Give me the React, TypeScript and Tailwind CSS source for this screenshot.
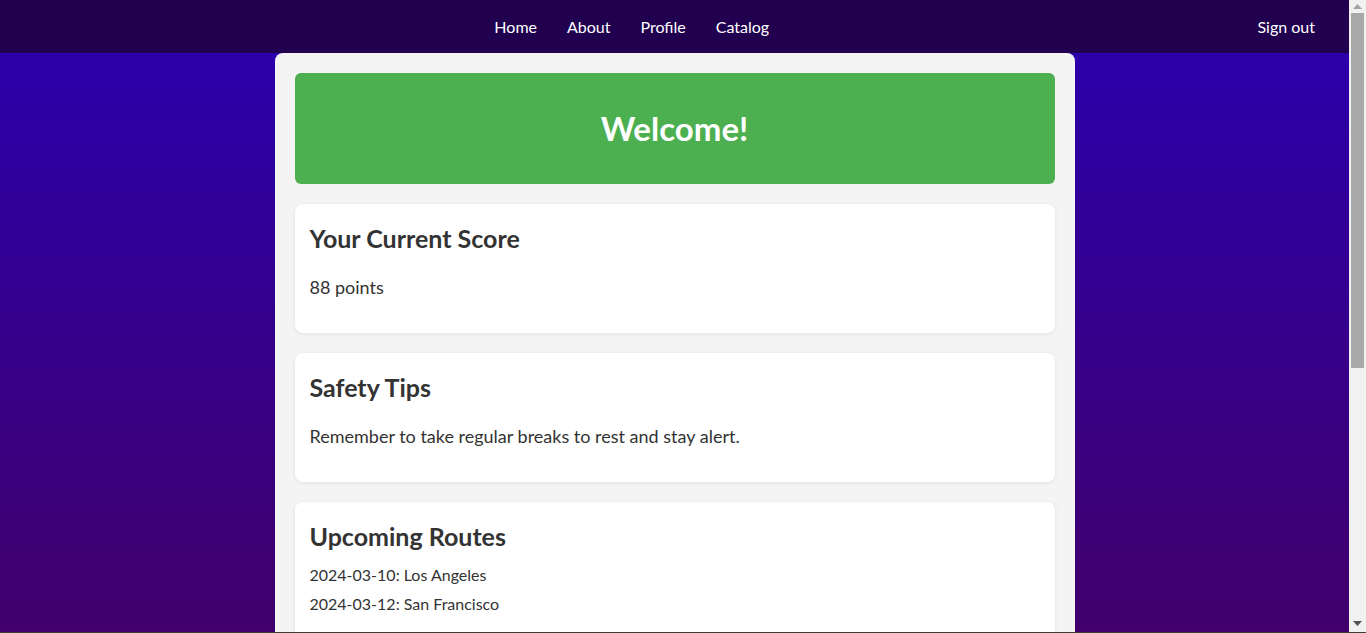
import React from "react";

function Card({ children, className = "" }: { children: React.ReactNode; className?: string }) {
  return (
    <section
      className={
        "mt-5 bg-white rounded-lg shadow-[0_1px_4px_rgba(0,0,0,0.08)] px-[15px] " + className
      }
    >
      {children}
    </section>
  );
}

export default function App() {
  const font = { fontFamily: '"Lato", "Open Sans", "Noto Sans", sans-serif' };
  return (
    <div className="h-[633px] flex flex-col overflow-hidden text-[#333]" style={font}>
      <div className="flex flex-1 min-h-0">
        <div className="flex-1 min-w-0 overflow-hidden bg-[linear-gradient(to_bottom,#2900b0,#41006b)]">
          <nav className="h-[53px] bg-[#20004f] flex items-center justify-between px-5 text-white text-[16px]">
            <div className="w-0" />
            <div className="flex items-center gap-[30px]">
              <a className="cursor-pointer">Home</a>
              <a className="cursor-pointer">About</a>
              <a className="cursor-pointer">Profile</a>
              <a className="cursor-pointer">Catalog</a>
            </div>
            <button className="px-[14px] text-white text-[16px]">Sign out</button>
          </nav>

          <main className="w-[800px] mx-auto bg-[#f4f4f4] rounded-lg p-5">
            <div className="h-[111px] bg-[#4caf50] rounded-md flex items-center justify-center">
              <h1 className="text-white text-[33px] font-bold leading-none">Welcome!</h1>
            </div>

            <Card className="pt-[18px] pb-[15px]">
              <h2 className="text-[25px] leading-[32px] font-bold mb-[21px]">Your Current Score</h2>
              <p className="text-[18px] leading-[24px] mb-[19px]">88 points</p>
            </Card>

            <Card className="pt-[18px] pb-[15px]">
              <h2 className="text-[25px] leading-[32px] font-bold mb-[21px]">Safety Tips</h2>
              <p className="text-[18px] leading-[24px] mb-[19px]">
                Remember to take regular breaks to rest and stay alert.
              </p>
            </Card>

            <Card className="pt-[18px] pb-[24px]">
              <h2 className="text-[25px] leading-[32px] font-bold mb-[8px]">Upcoming Routes</h2>
              <ul className="text-[16px] leading-[21px]">
                <li className="py-1">2024-03-10: Los Angeles</li>
                <li className="py-1">2024-03-12: San Francisco</li>
              </ul>
            </Card>
          </main>
        </div>

        <div className="w-[17px] bg-[#f1f1f1] flex flex-col items-center">
          <div className="h-[13px] flex items-center justify-center">
            <svg width="9" height="5" viewBox="0 0 9 5">
              <path d="M0 5 L4.5 0 L9 5 Z" fill="#a3a3a3" />
            </svg>
          </div>
          <div className="w-[13px] h-[355px] bg-[#a8a8a8]" />
          <div className="flex-1" />
          <div className="h-[17px] flex items-center justify-center">
            <svg width="9" height="5" viewBox="0 0 9 5">
              <path d="M0 0 L9 0 L4.5 5 Z" fill="#505050" />
            </svg>
          </div>
        </div>
      </div>
      <div className="h-px bg-[#3c3c3c]" />
    </div>
  );
}
